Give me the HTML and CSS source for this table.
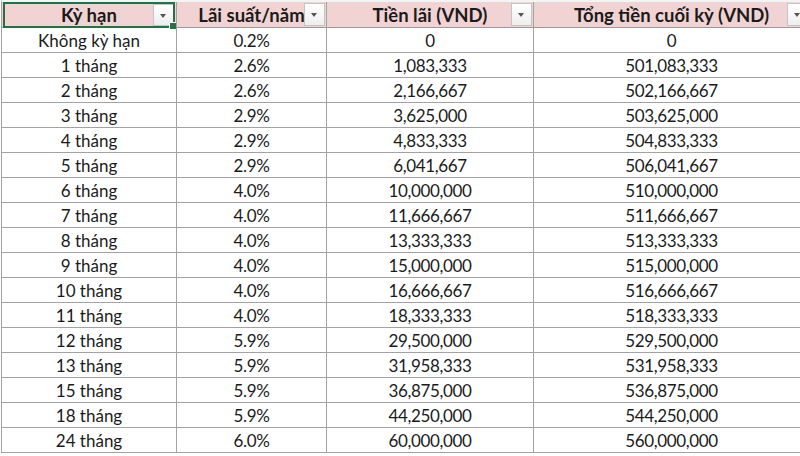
FILE: index.html
```html
<!DOCTYPE html>
<html lang="vi">
<head>
<meta charset="utf-8">
<title>Lãi suất</title>
<link rel="stylesheet" href="styles.css">
</head>
<body>
<div class="sheet">
  <div class="toprow"></div>
  <div class="grid">
    <div class="cell head sel">Kỳ hạn<span class="filter"></span><span class="outline"></span><span class="handle"></span></div>
    <div class="cell head">Lãi suất/năm<span class="filter"></span></div>
    <div class="cell head">Tiền lãi (VND)<span class="filter"></span></div>
    <div class="cell head">Tổng tiền cuối kỳ (VND)<span class="filter"></span></div>

    <div class="cell">Không kỳ hạn</div><div class="cell">0.2%</div><div class="cell">0</div><div class="cell">0</div>
    <div class="cell">1 tháng</div><div class="cell">2.6%</div><div class="cell">1,083,333</div><div class="cell">501,083,333</div>
    <div class="cell">2 tháng</div><div class="cell">2.6%</div><div class="cell">2,166,667</div><div class="cell">502,166,667</div>
    <div class="cell">3 tháng</div><div class="cell">2.9%</div><div class="cell">3,625,000</div><div class="cell">503,625,000</div>
    <div class="cell">4 tháng</div><div class="cell">2.9%</div><div class="cell">4,833,333</div><div class="cell">504,833,333</div>
    <div class="cell">5 tháng</div><div class="cell">2.9%</div><div class="cell">6,041,667</div><div class="cell">506,041,667</div>
    <div class="cell">6 tháng</div><div class="cell">4.0%</div><div class="cell">10,000,000</div><div class="cell">510,000,000</div>
    <div class="cell">7 tháng</div><div class="cell">4.0%</div><div class="cell">11,666,667</div><div class="cell">511,666,667</div>
    <div class="cell">8 tháng</div><div class="cell">4.0%</div><div class="cell">13,333,333</div><div class="cell">513,333,333</div>
    <div class="cell">9 tháng</div><div class="cell">4.0%</div><div class="cell">15,000,000</div><div class="cell">515,000,000</div>
    <div class="cell">10 tháng</div><div class="cell">4.0%</div><div class="cell">16,666,667</div><div class="cell">516,666,667</div>
    <div class="cell">11 tháng</div><div class="cell">4.0%</div><div class="cell">18,333,333</div><div class="cell">518,333,333</div>
    <div class="cell">12 tháng</div><div class="cell">5.9%</div><div class="cell">29,500,000</div><div class="cell">529,500,000</div>
    <div class="cell">13 tháng</div><div class="cell">5.9%</div><div class="cell">31,958,333</div><div class="cell">531,958,333</div>
    <div class="cell">15 tháng</div><div class="cell">5.9%</div><div class="cell">36,875,000</div><div class="cell">536,875,000</div>
    <div class="cell">18 tháng</div><div class="cell">5.9%</div><div class="cell">44,250,000</div><div class="cell">544,250,000</div>
    <div class="cell">24 tháng</div><div class="cell">6.0%</div><div class="cell">60,000,000</div><div class="cell">560,000,000</div>
  </div>
</div>
</body>
</html>
```

FILE: styles.css
```css
* { box-sizing: border-box; }
html, body {
  margin: 0;
  padding: 0;
  background: #ffffff;
  overflow: hidden;
}
body {
  width: 800px;
  height: 456px;
  font-family: Lato, "Open Sans", sans-serif;
  font-size: 17px;
  color: #1b1b1b;
}
.sheet {
  width: 800px;
  height: 456px;
  overflow: hidden;
}
.toprow {
  height: 3px;
  margin-left: 1px;
  background: #f4f4f4;
  border-left: 1px solid #c8c8c8;
  border-bottom: 1px solid #d0d0d0;
  width: 820px;
}
.grid {
  display: grid;
  grid-template-columns: 175px 150px 207px 276px;
  grid-auto-rows: 25px;
  margin-left: 1px;
  width: 808px;
}
.cell {
  position: relative;
  border-left: 1px solid #a2a2a2;
  border-bottom: 1px solid #a2a2a2;
  display: flex;
  align-items: center;
  justify-content: center;
  line-height: 1;
  white-space: nowrap;
  padding-top: 1px;
}
.cell:not(:nth-child(4n+1)) {
  letter-spacing: -0.35px;
}
.head {
  height: 26px;
  background: #f2d3d3;
  font-weight: 700;
  font-size: 18.5px;
  margin-top: -1px;
  border-bottom-color: #9a9a9a;
}
.grid > .head {
  align-self: start;
  letter-spacing: 0;
}
.filter {
  position: absolute;
  right: 1px;
  top: 1px;
  width: 21px;
  height: 23px;
  background: linear-gradient(#ffffff, #eeeeee);
  border: 1px solid #c4c4c4;
}
.filter::after {
  content: "";
  position: absolute;
  left: 6px;
  top: 9px;
  border-left: 3.5px solid transparent;
  border-right: 3.5px solid transparent;
  border-top: 4px solid #555555;
}
.sel .filter { right: 2px; top: 2px; height: 22px; }
.outline {
  position: absolute;
  left: 1px;
  right: 1px;
  top: 0;
  bottom: -1px;
  border: 2px solid #217346;
  pointer-events: none;
}
.handle {
  position: absolute;
  right: -1px;
  bottom: -3px;
  width: 6px;
  height: 6px;
  background: #217346;
  border: 1px solid #ffffff;
  box-sizing: content-box;
}
```
